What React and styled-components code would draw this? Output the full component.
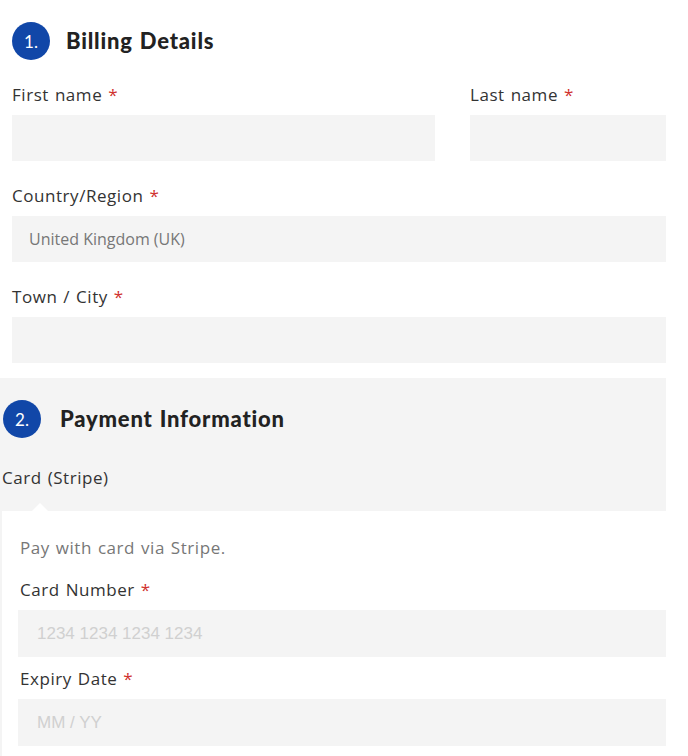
import styled, { createGlobalStyle } from 'styled-components';

const Global = createGlobalStyle`
	body {
		margin: 0;
		background: #fff;
		font-family: 'Open Sans', 'Liberation Sans', sans-serif;
		color: #333;
	}
`;

export default function App() {
	return (
		<Page>
			<Global />
			<Billing>
				<SectionHead>
					<Step>1.</Step>
					<Title>Billing Details</Title>
				</SectionHead>
				<Row>
					<Field grow={423}>
						<Label>First name <Req>*</Req></Label>
						<Input />
					</Field>
					<Field grow={196}>
						<Label>Last name <Req>*</Req></Label>
						<Input />
					</Field>
				</Row>
				<Field>
					<Label>Country/Region <Req>*</Req></Label>
					<Input>United Kingdom (UK)</Input>
				</Field>
				<Field>
					<Label>Town / City <Req>*</Req></Label>
					<Input />
				</Field>
			</Billing>
			<Payment>
				<PaymentHead>
					<Step>2.</Step>
					<Title>Payment Information</Title>
				</PaymentHead>
				<Method>Card (Stripe)</Method>
				<CardBox>
					<Description>Pay with card via Stripe.</Description>
					<Field>
						<Label>Card Number <Req>*</Req></Label>
						<StripeInput>1234 1234 1234 1234</StripeInput>
					</Field>
					<Field>
						<Label>Expiry Date <Req>*</Req></Label>
						<StripeInput>MM / YY</StripeInput>
					</Field>
					<Field>
						<Label>Card Code (CVC) <Req>*</Req></Label>
						<StripeInput>CVC</StripeInput>
					</Field>
				</CardBox>
			</Payment>
		</Page>
	);
}

const Page = styled.div`
	width: 666px;
	height: 756px;
	overflow: hidden;
`;

const Billing = styled.section`
	padding: 22px 0 15px 12px;
	display: flex;
	flex-direction: column;
	gap: 24px;
`;

const SectionHead = styled.div`
	display: flex;
	align-items: center;
	gap: 16px;
`;

const Step = styled.div`
	width: 38px;
	height: 38px;
	border-radius: 50%;
	background: #1147a8;
	color: #fff;
	display: flex;
	align-items: center;
	justify-content: center;
	font-family: 'Lato', sans-serif;
	font-size: 17px;
	flex-shrink: 0;
`;

const Title = styled.h2`
	margin: 0 0 2px;
	font-family: 'Lato', sans-serif;
	font-weight: 900;
	font-size: 22px;
	color: #222;
	letter-spacing: 0.8px;
	word-spacing: 1px;
`;

const Row = styled.div`
	display: flex;
	gap: 35px;
`;

const Field = styled.div`
	display: flex;
	flex-direction: column;
	gap: 9px;
	flex: ${props => props.grow || 1};
`;

const Label = styled.label`
	font-size: 17px;
	line-height: 22px;
	color: #333;
	letter-spacing: 0.55px;
	word-spacing: 1px;
`;

const Req = styled.span`
	color: #d0312d;
`;

const Input = styled.div`
	height: 46px;
	background: #f4f4f4;
	display: flex;
	align-items: center;
	padding-left: 17px;
	font-size: 16px;
	color: #777;
`;

const Payment = styled.section`
	background: #f4f4f4;
	padding-top: 22px;
`;

const PaymentHead = styled(SectionHead)`
	padding-left: 3px;
	gap: 19px;
`;

const Method = styled.div`
	font-size: 17px;
	line-height: 22px;
	color: #333;
	letter-spacing: 0.55px;
	word-spacing: 1px;
	padding-left: 2px;
	margin: 29px 0 22px;
`;

const CardBox = styled.div`
	position: relative;
	margin-left: 2px;
	background: #fff;
	padding: 26px 0 0 16px;
	display: flex;
	flex-direction: column;
	gap: 11px;
	height: 260px;

	& > ${Field} > ${Label} {
		padding-left: 2px;
	}

	&::before {
		content: '';
		position: absolute;
		top: -8px;
		left: 30px;
		border-left: 8px solid transparent;
		border-right: 8px solid transparent;
		border-bottom: 8px solid #fff;
	}
`;

const Description = styled.p`
	margin: 0 0 9px 2px;
	font-size: 17px;
	line-height: 22px;
	letter-spacing: 0.55px;
	word-spacing: 1px;
	color: #777;
`;

const StripeInput = styled.div`
	height: 47px;
	background: #f4f4f4;
	display: flex;
	align-items: center;
	padding-left: 19px;
	font-family: 'Liberation Sans', Arial, sans-serif;
	font-size: 17px;
	color: #d0d0d0;
`;
